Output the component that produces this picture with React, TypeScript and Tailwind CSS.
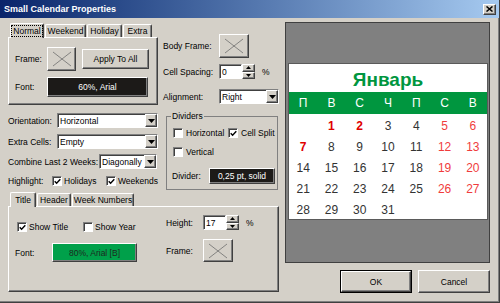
import React from 'react';

const raised =
  'border border-t-white border-l-white border-r-[#404040] border-b-[#404040] shadow-[inset_-1px_-1px_0_#808080]';
const sunken =
  'border border-t-[#808080] border-l-[#808080] border-r-white border-b-white shadow-[inset_1px_1px_0_#404040]';

const FrameButton: React.FC<{ className: string }> = ({ className }) => (
  <div className={`${raised} bg-[#d4d0c8] flex items-center justify-center ${className}`}>
    <svg width="22" height="16" viewBox="0 0 22 16">
      <line x1="2" y1="1" x2="20" y2="15" stroke="#6e6e6e" strokeWidth="0.8" />
      <line x1="20" y1="1" x2="2" y2="15" stroke="#6e6e6e" strokeWidth="0.8" />
    </svg>
  </div>
);

const Select: React.FC<{ value: string; className: string }> = ({ value, className }) => (
  <div className={`${sunken} bg-white h-[15px] flex items-center ${className}`}>
    <span className="flex-1 pl-[2px]">{value}</span>
    <div className={`${raised} bg-[#d4d0c8] w-[12px] h-full flex items-center justify-center`}>
      <svg width="7" height="4" viewBox="0 0 7 4">
        <path d="M0 0h7L3.5 4z" fill="#000" />
      </svg>
    </div>
  </div>
);

const Spin: React.FC<{ value: string }> = ({ value }) => (
  <div className="flex h-[15px]">
    <div className={`${sunken} bg-white w-[23px] h-full flex items-center pl-[2px]`}>{value}</div>
    <div className="flex flex-col w-[13px] h-full">
      <div className={`${raised} bg-[#d4d0c8] flex-1 flex items-center justify-center`}>
        <svg width="5" height="3" viewBox="0 0 5 3">
          <path d="M2.5 0L5 3H0z" fill="#000" />
        </svg>
      </div>
      <div className={`${raised} bg-[#d4d0c8] flex-1 flex items-center justify-center`}>
        <svg width="5" height="3" viewBox="0 0 5 3">
          <path d="M0 0h5L2.5 3z" fill="#000" />
        </svg>
      </div>
    </div>
  </div>
);

const Check: React.FC<{ checked?: boolean }> = ({ checked }) => (
  <div className={`${sunken} bg-white w-[10px] h-[10px] flex items-center justify-center shrink-0`}>
    {checked && (
      <svg width="7" height="7" viewBox="0 0 7 7">
        <path d="M0.7 3.3L2.6 5.3L6.3 1.2" stroke="#000" strokeWidth="1.4" fill="none" />
      </svg>
    )}
  </div>
);

const Tab: React.FC<{ label: string; w: string; active?: boolean; focus?: boolean }> = ({
  label,
  w,
  active,
  focus,
}) => (
  <div
    className={`${w} ${
      active ? 'h-[15px] relative z-10 -mb-px' : 'h-[13px]'
    } bg-[#d4d0c8] border-t border-l border-r border-t-white border-l-white border-r-[#404040] rounded-t-[2px] shadow-[inset_-1px_0_0_#808080] flex items-center justify-center`}
  >
    <span className={focus ? 'outline outline-1 outline-dotted outline-black px-[1px]' : ''}>{label}</span>
  </div>
);

const weekdays = ['П', 'В', 'С', 'Ч', 'П', 'С', 'В'];
const days: (number | null)[] = [null, ...Array.from({ length: 31 }, (_, i) => i + 1)];
const boldRed = [1, 2, 7];
const lightRed = [5, 6, 12, 13, 19, 20, 26, 27];

export default function App() {
  return (
    <div className="w-[500px] h-[303px] bg-[#d4d0c8] border-r border-b border-r-[#404040] border-b-[#404040] shadow-[inset_-1px_-1px_0_#808080] overflow-hidden font-['Liberation_Sans',Arial,sans-serif] text-[8.5px] leading-[10px] text-black">
      {/* Title bar */}
      <div className="h-[18px] bg-gradient-to-r from-[#0a246a] to-[#a6caf0] flex items-center justify-between pl-[4px] pr-[3px]">
        <span className="text-white font-bold text-[9px]">Small Calendar Properties</span>
        <div className={`${raised} bg-[#d4d0c8] w-[13px] h-[11px] flex items-center justify-center`}>
          <svg width="7" height="6" viewBox="0 0 7 6">
            <path d="M0.5 0.5L6.5 5.5M6.5 0.5L0.5 5.5" stroke="#000" strokeWidth="1.5" />
          </svg>
        </div>
      </div>

      <div className="flex">
        {/* Left area */}
        <div className="w-[285px] pl-[8px] flex flex-col">
          <div className="flex h-[174px]">
            {/* Left column */}
            <div className="w-[150px] flex flex-col pt-[5px]">
              <div className="flex items-end pl-[2px] gap-[1px] h-[14px]">
                <Tab label="Normal" w="w-[34px]" active focus />
                <Tab label="Weekend" w="w-[41px]" />
                <Tab label="Holiday" w="w-[35px]" />
                <Tab label="Extra" w="w-[29px]" />
              </div>
              <div className={`${raised} h-[68px] pt-[9px] pl-[6px] flex flex-col`}>
                <div className="flex items-center h-[24px]">
                  <span className="w-[32px]">Frame:</span>
                  <FrameButton className="w-[29px] h-[24px]" />
                  <div className={`${raised} bg-[#d4d0c8] ml-[6px] w-[67px] h-[20px] flex items-center justify-center`}>
                    Apply To All
                  </div>
                </div>
                <div className="flex items-center h-[20px] mt-[6px]">
                  <span className="w-[32px]">Font:</span>
                  <div className={`${raised} bg-[#1c1a18] text-white w-[101px] h-full flex items-center justify-center`}>
                    60%, Arial
                  </div>
                </div>
              </div>
              <div className="flex items-center h-[15px] mt-[8px]">
                <span className="w-[49px]">Orientation:</span>
                <Select value="Horizontal" className="w-[101px]" />
              </div>
              <div className="flex items-center h-[15px] mt-[6px]">
                <span className="w-[49px]">Extra Cells:</span>
                <Select value="Empty" className="w-[101px]" />
              </div>
              <div className="flex items-center h-[15px] mt-[5px]">
                <span className="w-[91px]">Combine Last 2 Weeks:</span>
                <Select value="Diagonally" className="w-[58px]" />
              </div>
              <div className="flex items-center h-[12px] mt-[6px]">
                <span className="w-[44px]">Highlight:</span>
                <div className="w-[54px] flex items-center gap-[2px]">
                  <Check checked />
                  <span>Holidays</span>
                </div>
                <div className="flex items-center gap-[2px]">
                  <Check checked />
                  <span>Weekends</span>
                </div>
              </div>
            </div>

            {/* Right column */}
            <div className="ml-[5px] w-[116px] flex flex-col pt-[16px]">
              <div className="flex items-center h-[24px]">
                <span className="w-[56px]">Body Frame:</span>
                <FrameButton className="w-[30px] h-[24px]" />
              </div>
              <div className="flex items-center h-[15px] mt-[6px]">
                <span className="w-[56px]">Cell Spacing:</span>
                <Spin value="0" />
                <span className="ml-[7px]">%</span>
              </div>
              <div className="flex items-center h-[15px] mt-[10px]">
                <span className="w-[56px]">Alignment:</span>
                <Select value="Right" className="w-[60px]" />
              </div>
              <fieldset className="mt-[7px] ml-[3px] w-[112px] h-[79px] border border-[#808080] flex flex-col">
                <legend className="ml-[4px] px-[1px] leading-[10px]">Dividers</legend>
                <div className="flex items-center mt-[7px] pl-[6px]">
                  <div className="w-[55px] flex items-center gap-[3px]">
                    <Check />
                    <span>Horizontal</span>
                  </div>
                  <div className="flex items-center gap-[3px]">
                    <Check checked />
                    <span>Cell Split</span>
                  </div>
                </div>
                <div className="flex items-center gap-[3px] mt-[9px] pl-[6px]">
                  <Check />
                  <span>Vertical</span>
                </div>
                <div className="flex items-center h-[16px] mt-[11px] pl-[5px]">
                  <span className="w-[37px]">Divider:</span>
                  <div className={`${raised} bg-[#1c1a18] text-white w-[66px] h-full flex items-center justify-center`}>
                    0,25 pt, solid
                  </div>
                </div>
              </fieldset>
            </div>
          </div>

          {/* Bottom tab set */}
          <div className="flex items-end pl-[2px] gap-[1px] h-[14px]">
            <Tab label="Title" w="w-[26px]" active />
            <Tab label="Header" w="w-[34px]" />
            <Tab label="Week Numbers" w="w-[62px]" />
          </div>
          <div className={`${raised} w-[271px] h-[86px] flex`}>
            <div className="w-[157px] pl-[6px] pt-[15px] flex flex-col">
              <div className="flex items-center h-[10px] ml-[2px]">
                <div className="w-[66px] flex items-center gap-[2px]">
                  <Check checked />
                  <span>Show Title</span>
                </div>
                <div className="flex items-center gap-[2px]">
                  <Check />
                  <span>Show Year</span>
                </div>
              </div>
              <div className="flex items-center h-[19px] mt-[11px]">
                <span className="w-[37px]">Font:</span>
                <div className={`${raised} bg-[#00a04a] text-[#1d2a20] w-[85px] h-full flex items-center justify-center`}>
                  80%, Arial [B]
                </div>
              </div>
            </div>
            <div className="pt-[8px] flex flex-col">
              <div className="flex items-center h-[15px]">
                <span className="w-[37px]">Height:</span>
                <Spin value="17" />
                <span className="ml-[7px]">%</span>
              </div>
              <div className="flex items-center h-[23px] mt-[9px]">
                <span className="w-[37px]">Frame:</span>
                <FrameButton className="w-[30px] h-[23px]" />
              </div>
            </div>
          </div>
        </div>

        {/* Right area: preview + buttons */}
        <div className="w-[205px] pt-[4px] flex flex-col">
          <div className="h-[241px] bg-[#808080] border border-[#404040] pt-[40px] pl-[2px] pr-[1px]">
            <div className="bg-white border border-[#5a5a5a] font-['Liberation_Sans',Arial,sans-serif] h-[157px]">
              <div className="h-[28px] flex items-center justify-center pt-[3px] text-[19px] leading-none font-bold text-[#00963f]">
                Январь
              </div>
              <div className="h-[22px] bg-[#00963f] grid grid-cols-7 items-center text-white text-[12px] leading-none">
                {weekdays.map((d, i) => (
                  <span key={i} className="text-center">
                    {d}
                  </span>
                ))}
              </div>
              <div className="grid grid-cols-7 mt-[1px] text-[12px] leading-none">
                {days.map((d, i) => (
                  <span
                    key={i}
                    className={`h-[21px] flex items-center justify-center ${
                      d && boldRed.includes(d)
                        ? 'text-[#e00000] font-bold'
                        : d && lightRed.includes(d)
                        ? 'text-[#f03c3c]'
                        : 'text-[#333333]'
                    }`}
                  >
                    {d ?? ''}
                  </span>
                ))}
              </div>
            </div>
          </div>
          <div className="flex justify-end gap-[6px] mt-[7px]">
            <div className="w-[72px] h-[23px] border border-black">
              <div className={`${raised} bg-[#d4d0c8] w-full h-full flex items-center justify-center`}>OK</div>
            </div>
            <div className={`${raised} bg-[#d4d0c8] w-[72px] h-[23px] flex items-center justify-center`}>Cancel</div>
          </div>
        </div>
      </div>
    </div>
  );
}
